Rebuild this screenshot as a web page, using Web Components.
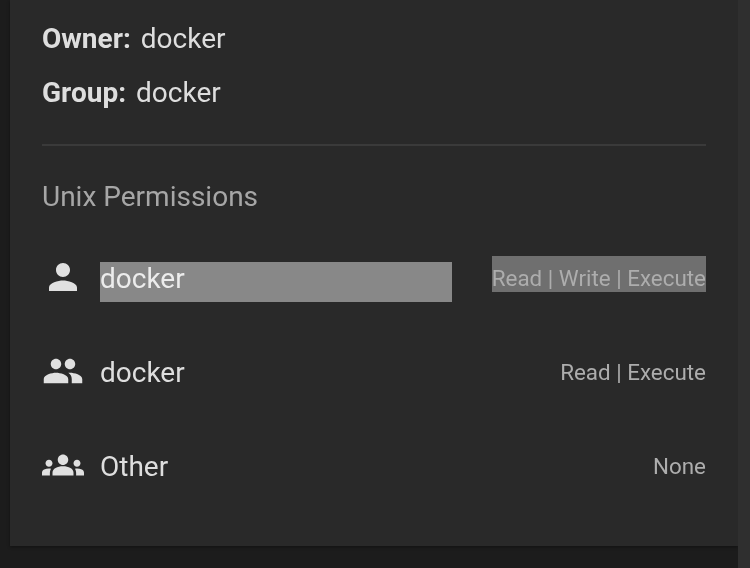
<!DOCTYPE html>
<html>
<head>
<meta charset="utf-8">
<title>Permissions</title>
<style>
  html, body { margin: 0; height: 100%; background: #1c1c1c; overflow: hidden; }
  body { font-family: Roboto, "Liberation Sans", sans-serif; }
</style>
</head>
<body>
<app-shell>
  <info-card>
    <info-line label="Owner:" value="docker"></info-line>
    <info-line label="Group:" value="docker"></info-line>
    <hr-line></hr-line>
    <section-title>Unix Permissions</section-title>
    <perm-row icon="person" name="docker" access="Read | Write | Execute" marked></perm-row>
    <perm-row icon="people" name="docker" access="Read | Execute"></perm-row>
    <perm-row icon="groups" name="Other" access="None"></perm-row>
  </info-card>
</app-shell>

<script>
const ICONS = {
  person: "M12 12c2.21 0 4-1.79 4-4s-1.79-4-4-4-4 1.79-4 4 1.79 4 4 4zm0 2c-2.67 0-8 1.34-8 4v2h16v-2c0-2.66-5.33-4-8-4z",
  people: "M16 11c1.66 0 2.99-1.34 2.99-3S17.66 5 16 5c-1.66 0-3 1.34-3 3s1.34 3 3 3zm-8 0c1.66 0 2.99-1.34 2.99-3S9.66 5 8 5C6.34 5 5 6.34 5 8s1.34 3 3 3zm0 2c-2.33 0-7 1.17-7 3.5V19h14v-2.5c0-2.33-4.67-3.5-7-3.5zm8 0c-.29 0-.62.02-.97.05 1.16.84 1.97 1.97 1.97 3.45V19h6v-2.5c0-2.33-4.67-3.5-7-3.5z",
  groups: "M12 12.75c1.63 0 3.07.39 4.24.9 1.08.48 1.76 1.56 1.76 2.73V18H6v-1.61c0-1.18.68-2.26 1.76-2.73 1.17-.52 2.61-.91 4.24-.91zM4 13c1.1 0 2-.9 2-2s-.9-2-2-2-2 .9-2 2 .9 2 2 2zm1.13 1.1c-.37-.06-.74-.1-1.13-.1-.99 0-1.93.21-2.78.58C.48 14.9 0 15.62 0 16.43V18h4.5v-1.61c0-.83.23-1.61.63-2.29zM20 13c1.1 0 2-.9 2-2s-.9-2-2-2-2 .9-2 2 .9 2 2 2zm4 3.43c0-.81-.48-1.53-1.22-1.85-.85-.37-1.79-.58-2.78-.58-.39 0-.76.04-1.13.1.4.68.63 1.46.63 2.29V18H24v-1.57zM12 6c1.66 0 3 1.34 3 3s-1.34 3-3 3-3-1.34-3-3 1.34-3 3-3z"
};

class AppShell extends HTMLElement {
  constructor() {
    super();
    this.attachShadow({ mode: "open" }).innerHTML = `
    <style>
      :host { display: grid; grid-template-columns: 1fr 12px; height: 568px; }
      main { padding: 0 0 22px 10px; min-width: 0; }
      .scrollbar { background: #2f2f2f; }
    </style>
    <main><slot></slot></main>
    <div class="scrollbar"></div>`;
  }
}

class InfoCard extends HTMLElement {
  constructor() {
    super();
    this.attachShadow({ mode: "open" }).innerHTML = `
    <style>
      :host {
        display: block;
        box-sizing: border-box;
        height: 546px;
        padding: 12px 32px 0 32px;
        background: #292929;
        box-shadow: 0 1px 3px #0006;
      }
    </style>
    <slot></slot>`;
  }
}

class InfoLine extends HTMLElement {
  constructor() {
    super();
    this.attachShadow({ mode: "open" }).innerHTML = `
    <style>
      :host {
        display: flex;
        gap: 10px;
        height: 54px;
        line-height: 54px;
        font-size: 28px;
        color: #dedede;
        will-change: opacity;
      }
      b { font-weight: 700; }
    </style>
    <b>${this.getAttribute("label")}</b><span>${this.getAttribute("value")}</span>`;
  }
}

class HrLine extends HTMLElement {
  constructor() {
    super();
    this.attachShadow({ mode: "open" }).innerHTML = `
    <style>
      :host { display: block; height: 2px; margin-top: 24px; background: #3a3a3a; }
    </style>`;
  }
}

class SectionTitle extends HTMLElement {
  constructor() {
    super();
    this.attachShadow({ mode: "open" }).innerHTML = `
    <style>
      :host {
        display: block;
        margin: 31px 0 15px;
        line-height: 40px;
        font-size: 28px;
        color: #a6a6a6;
        will-change: opacity;
      }
    </style>
    <slot></slot>`;
  }
}

class PermRow extends HTMLElement {
  constructor() {
    super();
    const marked = this.hasAttribute("marked") ? "marked" : "";
    this.attachShadow({ mode: "open" }).innerHTML = `
    <style>
      :host {
        display: grid;
        grid-template-columns: 42px 352px 1fr;
        column-gap: 16px;
        align-items: center;
        height: 94px;
        will-change: opacity;
      }
      svg { width: 42px; height: 42px; fill: #e0e0e0; display: block; margin-top: -4px; }
      .name { font-size: 28px; line-height: 40px; color: #dedede; }
      .access {
        justify-self: end;
        font-size: 22.4px;
        line-height: 36px;
        margin-bottom: 2px;
        white-space: nowrap;
        color: #adadad;
      }
      .marked.name { background: #888; color: #ececec; margin-top: 6px; }
      .marked.name span { position: relative; top: -3px; }
      .marked.access { background: #6f6f6f; margin-top: -8px; }
      .marked.access span { position: relative; top: 4px; }
    </style>
    <svg viewBox="0 0 24 24"><path d="${ICONS[this.getAttribute("icon")]}"/></svg>
    <div class="name ${marked}"><span>${this.getAttribute("name")}</span></div>
    <div class="access ${marked}"><span>${this.getAttribute("access")}</span></div>`;
  }
}

customElements.define("app-shell", AppShell);
customElements.define("info-card", InfoCard);
customElements.define("info-line", InfoLine);
customElements.define("hr-line", HrLine);
customElements.define("section-title", SectionTitle);
customElements.define("perm-row", PermRow);
</script>
</body>
</html>
